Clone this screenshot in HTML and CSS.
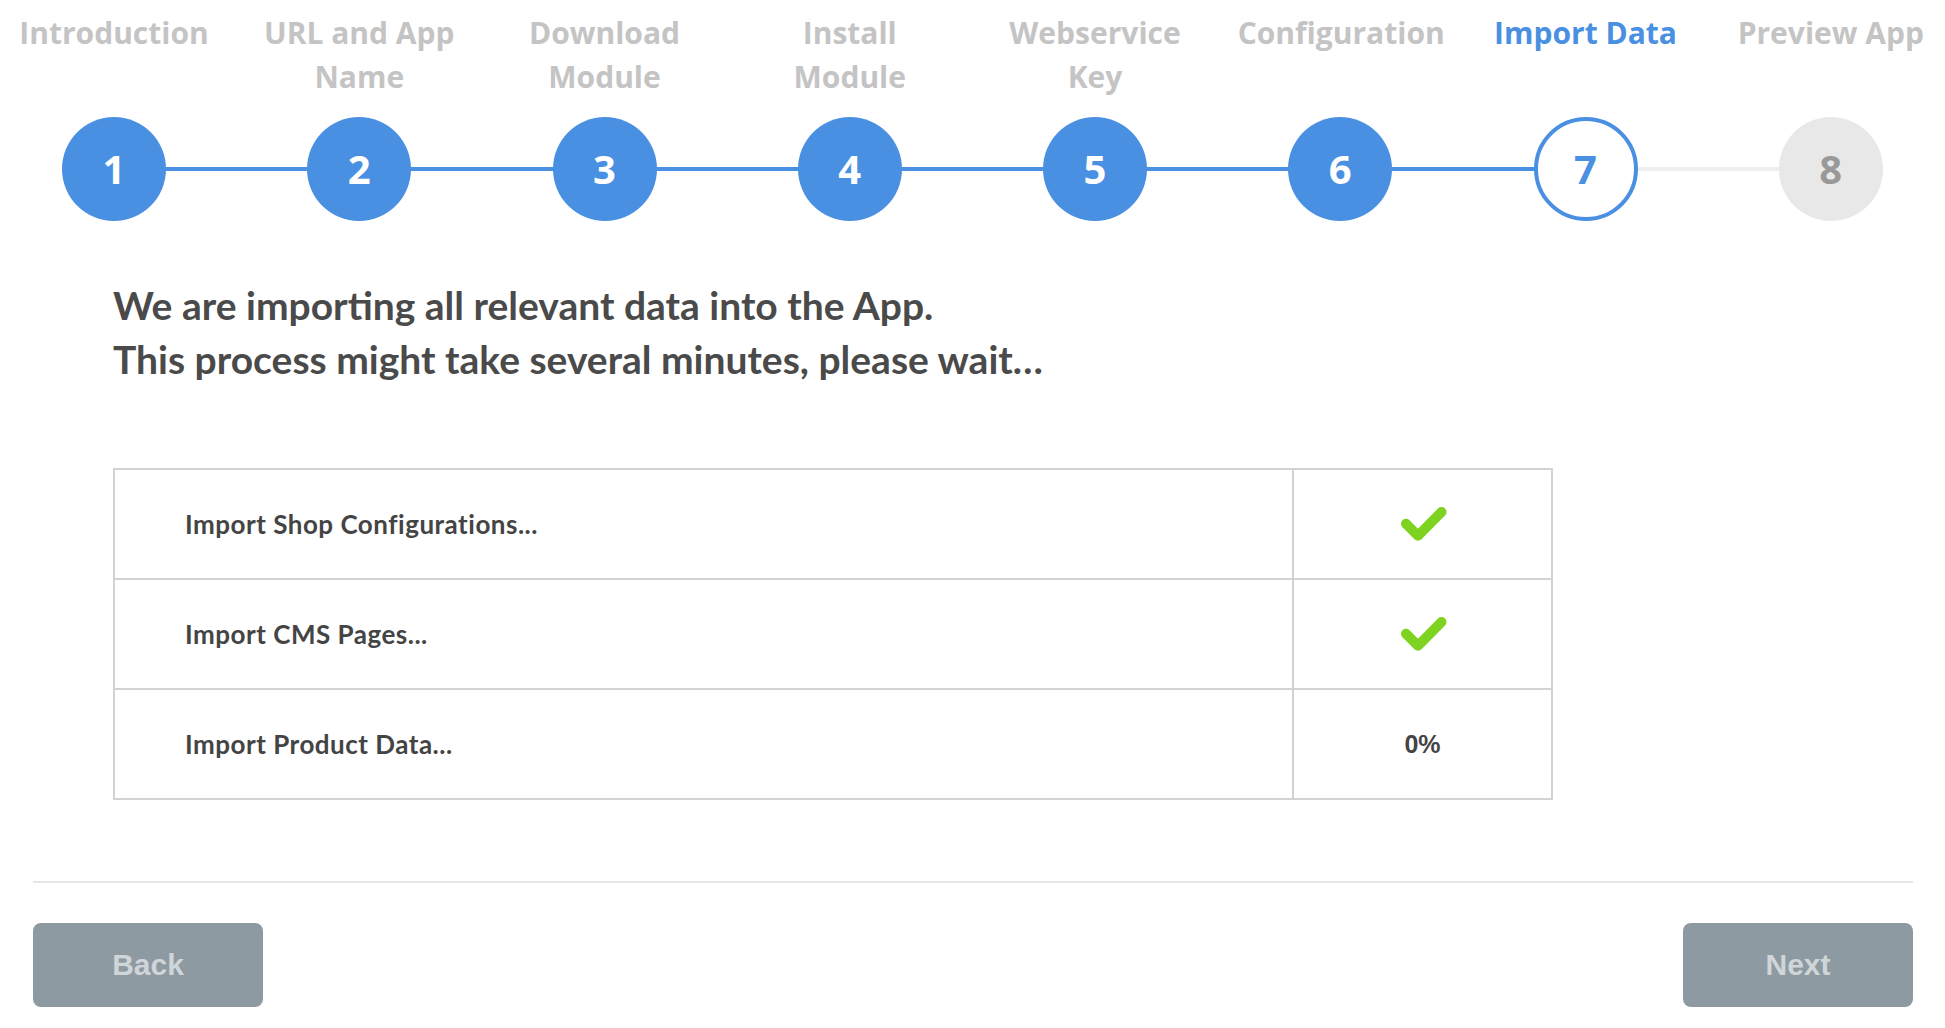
FILE: index.html
```html
<!DOCTYPE html>
<html lang="en">
<head>
<meta charset="utf-8">
<title>Import Data</title>
<link rel="stylesheet" href="styles.css">
</head>
<body>
<div class="page">
  <ol class="steps">
    <li class="step done"><div class="label">Introduction</div><div class="node"><span class="circle">1</span></div></li>
    <li class="step done"><div class="label">URL and App Name</div><div class="node"><span class="circle">2</span></div></li>
    <li class="step done"><div class="label">Download Module</div><div class="node"><span class="circle">3</span></div></li>
    <li class="step done"><div class="label">Install Module</div><div class="node"><span class="circle">4</span></div></li>
    <li class="step done"><div class="label">Webservice Key</div><div class="node"><span class="circle">5</span></div></li>
    <li class="step done"><div class="label">Configuration</div><div class="node"><span class="circle">6</span></div></li>
    <li class="step active"><div class="label">Import Data</div><div class="node"><span class="circle">7</span></div></li>
    <li class="step todo"><div class="label">Preview App</div><div class="node"><span class="circle">8</span></div></li>
  </ol>

  <h2 class="intro">We are importing all relevant data into the App.<br>This process might take several minutes, please wait…</h2>

  <table class="tasks">
    <tr>
      <td class="task">Import Shop Configurations...</td>
      <td class="status"><svg class="check" width="48" height="38" viewBox="0 0 48 38"><path d="M7 18.7 L19 30.7 L42.5 7" fill="none" stroke="#7ed321" stroke-width="10" stroke-linecap="round" stroke-linejoin="round"/></svg></td>
    </tr>
    <tr>
      <td class="task">Import CMS Pages...</td>
      <td class="status"><svg class="check" width="48" height="38" viewBox="0 0 48 38"><path d="M7 18.7 L19 30.7 L42.5 7" fill="none" stroke="#7ed321" stroke-width="10" stroke-linecap="round" stroke-linejoin="round"/></svg></td>
    </tr>
    <tr>
      <td class="task">Import Product Data...</td>
      <td class="status"><span class="percent">0%</span></td>
    </tr>
  </table>

  <div class="footer">
    <button class="btn" type="button">Back</button>
    <button class="btn" type="button">Next</button>
  </div>
</div>
</body>
</html>
```

FILE: styles.css
```css
html, body {
  margin: 0;
  padding: 0;
  background: #ffffff;
  overflow: hidden;
}

.page {
  width: 1945px;
  height: 1028px;
  font-family: "Open Sans", "Liberation Sans", sans-serif;
}

.steps {
  list-style: none;
  margin: 0 0 0 -8.6px;
  padding: 11px 0 0 0;
  display: grid;
  grid-template-columns: repeat(8, 245.25px);
}

.step {
  display: flex;
  flex-direction: column;
  align-items: stretch;
}

.label {
  height: 88px;
  font-size: 30px;
  line-height: 44px;
  font-weight: 700;
  color: #c4c4c4;
  text-align: center;
  padding: 0 20px;
}

.step.active .label {
  color: #4a90e2;
}

.node {
  position: relative;
  margin-top: 18px;
  display: flex;
  justify-content: center;
}

.node::after {
  content: "";
  position: absolute;
  left: 50%;
  width: 100%;
  top: 50px;
  height: 4px;
  background: #4a90e2;
  z-index: 0;
}

.step.active .node::after {
  background: #eeeeee;
}

.step:last-child .node::after {
  display: none;
}

.circle {
  position: relative;
  z-index: 1;
  box-sizing: border-box;
  width: 104px;
  height: 104px;
  border-radius: 50%;
  background: #4a90e2;
  color: #ffffff;
  display: flex;
  align-items: center;
  justify-content: center;
  font-size: 40px;
  font-weight: 700;
  line-height: 1;
}

.step.active .circle {
  background: #ffffff;
  border: 4px solid #4a90e2;
  color: #4a90e2;
}

.step.todo .circle {
  background: #e8e8e8;
  color: #999999;
}

.intro {
  margin: 57px 0 0 113px;
  font-family: "Lato", "Open Sans", sans-serif;
  font-size: 39px;
  line-height: 54px;
  font-weight: 700;
  color: #4a4a4a;
}

.tasks {
  margin: 82px 0 0 113px;
  width: 1440px;
  border-collapse: collapse;
  border: 2px solid #d3d3d3;
}

.tasks td {
  border: 2px solid #d3d3d3;
  height: 108px;
  padding: 0;
  vertical-align: middle;
}

.task {
  width: 1107px;
  padding-left: 70px !important;
  font-family: "Lato", "Open Sans", sans-serif;
  font-size: 26px;
  letter-spacing: 0.5px;
  font-weight: 700;
  color: #444444;
}

.status {
  text-align: center;
}

.check {
  display: block;
  margin: 0 auto;
}

.percent {
  font-family: "Liberation Sans", Arial, sans-serif;
  font-size: 25px;
  font-weight: 700;
  color: #444444;
}

.footer {
  margin: 81px 32px 0 33px;
  border-top: 2px solid #e6e6e6;
  padding-top: 40px;
  display: flex;
  justify-content: space-between;
}

.btn {
  width: 230px;
  height: 84px;
  border: none;
  border-radius: 8px;
  background: #8e9aa2;
  color: #d0d5d8;
  font-family: "Liberation Sans", Arial, sans-serif;
  font-size: 30px;
  font-weight: 700;
  padding: 0;
}
```
